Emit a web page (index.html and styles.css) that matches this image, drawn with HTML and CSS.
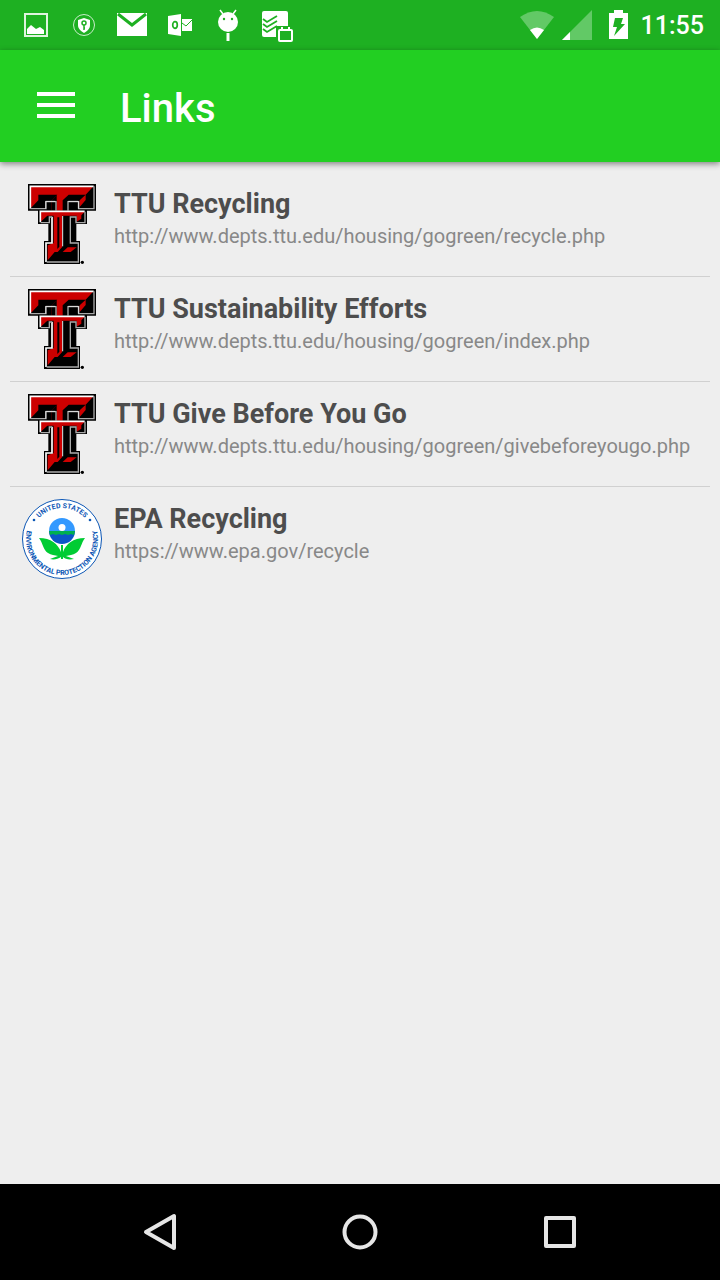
FILE: index.html
```html
<!DOCTYPE html>
<html lang="en">
<head>
<meta charset="utf-8">
<meta name="viewport" content="width=device-width, initial-scale=1">
<title>Links</title>
<link rel="stylesheet" href="styles.css">
</head>
<body>
<svg class="defs" aria-hidden="true">
  <symbol id="double-t" viewBox="18 18 240 240">
    <path d="M36 18H240V98H213V138H181V189H192V258H84V189H97V138H66V98H36Z" fill="#000"/>
    <path d="M45 26H233V90H189V69H155V98H122V69H89V90H45Z" fill="#000"/>
    <path d="M45 26H231L209 50V66L191 87V67L209 50H158L140 67V98H106V69L124 50H67V67L47 88H45Z" fill="#c00"/>
    <path d="M106 69L122 52V98H106Z" fill="#000"/>
    <path d="M43 92V25H233" fill="none" stroke="#fff" stroke-width="5"/>
    <path d="M234 25V92H188V71H156V98M120 98V71H90V92H43" fill="none" stroke="#aaa" stroke-width="4"/>
    <path d="M89 92V70H118M187 92V70H157" fill="none" stroke="#fff" stroke-width="2"/>
    <path d="M72 98H209V134H178V118H164V195H187V253H90V195H108V118H100V134H72Z" fill="#000"/>
    <path d="M74 101H206L196 112V122L182 131V113H138V208L125 222H116L95 247V202L113 195V113H94L76 130H74Z" fill="#c00"/>
    <path d="M124 118H130V206L124 213Z" fill="#000"/>
    <path d="M140 222L155 208H182L164 222Z" fill="#c00"/>
    <path d="M73 133V100H206M108 116V195H90V252" fill="none" stroke="#fff" stroke-width="5"/>
    <path d="M207 101V134H180V117H163V195H187V252H92M108 117H100V134H74" fill="none" stroke="#aaa" stroke-width="4"/>
    <path d="M140 114V205" fill="none" stroke="#e8e8e8" stroke-width="3"/>
    <circle cx="199" cy="253" r="5"/>
  </symbol>
</svg>
<div class="screen">
  <div class="status">
    <div class="notices">
      <svg viewBox="0 0 32 32"><path d="M5 5h22v22H5z" fill="none" stroke="#dff4df" stroke-width="2"/><path d="M7 25v-5l4-4 5 4 4-2 4 3v4z" fill="#fff"/></svg>
      <svg viewBox="0 0 32 32"><circle cx="16" cy="16" r="10.500" fill="none" stroke="#c8edc9"/><path d="M16 9l6 2v5c0 4-3 6-6 8-3-2-6-4-6-8v-5z" fill="#fff"/><circle cx="16" cy="14" r="2" fill="none" stroke="#1eb022" stroke-width="1.500"/><path d="M16 16v5m0-2h1" stroke="#1eb022" stroke-width="1.500"/></svg>
      <svg viewBox="0 0 32 32"><path d="M1 4h30v23H1z" fill="#fff"/><path d="M2 5l14 11L30 5" fill="none" stroke="#1eb022" stroke-width="3"/></svg>
      <svg viewBox="0 0 32 32"><path d="M4 7l13-2v22L4 25zM18 10h10v12H18z" fill="#fff"/><ellipse cx="11" cy="16" rx="2.300" ry="3.300" fill="none" stroke="#1eb022" stroke-width="1.700"/><path d="M18 14l4 3 6-6" fill="none" stroke="#1eb022"/></svg>
      <svg viewBox="0 0 32 32"><circle cx="16" cy="13" r="10" fill="#fff"/><path d="M11 5L8 1m13 4l3-4" stroke="#fff" stroke-width="1.500"/><path d="M16 24v8" stroke="#fff" stroke-width="3"/><circle cx="12" cy="10" r="1.200" fill="#1eb022"/><circle cx="20" cy="10" r="1.200" fill="#1eb022"/></svg>
      <svg class="tasks" viewBox="0 0 34 34"><rect x="2" y="3" width="26" height="26" rx="2" fill="#fff"/><path d="M3 11l4 3 10-6M3 16l4 3 10-6M3 21l4 3 10-6" fill="none" stroke="#1eb022" stroke-width="1.800"/><path d="M16 18h15v15H16z" fill="#1eb022"/><rect x="19" y="22" width="13" height="11" rx="1" fill="#1eb022" stroke="#fff" stroke-width="2"/><path d="M22 19v3m7-3v3" stroke="#fff" stroke-width="2"/></svg>
    </div>
    <div class="system">
      <svg class="wifi" viewBox="0 0 36 32"><path d="M18 30L1 8q17-12 34 0z" fill="#62c966"/><path d="M18 30l-7-9q7-5 14 0z" fill="#fff"/></svg>
      <svg class="signal" viewBox="0 0 30 30"><path d="M0 30L30 0v30z" fill="#62c966"/><path d="M0 30l8-8v8z" fill="#fff"/></svg>
      <svg class="battery" viewBox="0 0 20 30"><path d="M5 0h9v3h5v26H0V3h5z" fill="#fff"/><path d="M6 8h8l-2 6h4L5 26l3-9H4z" fill="#1eb022"/></svg>
      <time>11:55</time>
    </div>
  </div>
  <header class="bar">
    <button class="menu" aria-label="Open menu"><svg viewBox="0 0 38 26"><path d="M0 2h38M0 13h38M0 24h38" stroke="#fff" stroke-width="4"/></svg></button>
    <h1>Links</h1>
  </header>
  <main class="list">
    <a class="item" href="http://www.depts.ttu.edu/housing/gogreen/recycle.php"><svg class="logo"><use href="#double-t"/></svg><span class="copy"><strong>TTU Recycling</strong><span class="url">http://www.depts.ttu.edu/housing/gogreen/recycle.php</span></span></a>
    <a class="item" href="http://www.depts.ttu.edu/housing/gogreen/index.php"><svg class="logo"><use href="#double-t"/></svg><span class="copy"><strong>TTU Sustainability Efforts</strong><span class="url">http://www.depts.ttu.edu/housing/gogreen/index.php</span></span></a>
    <a class="item" href="http://www.depts.ttu.edu/housing/gogreen/givebeforeyougo.php"><svg class="logo"><use href="#double-t"/></svg><span class="copy"><strong>TTU Give Before You Go</strong><span class="url">http://www.depts.ttu.edu/housing/gogreen/givebeforeyougo.php</span></span></a>
    <a class="item" href="https://www.epa.gov/recycle">
      <svg class="logo" viewBox="0 0 80 80">
        <circle cx="40" cy="40" r="39.500" fill="#fff" stroke="#0b56b5"/>
        <path d="M27 32a13 13 0 0 1 26 0z" fill="#39f"/>
        <path d="M27 32h26a13 13 0 0 1-26 0z" fill="#0b56c8"/>
        <path d="M27 32h26l-1 4-3-1-3 1-3-1-3 1-3-1-3 1-3-1-3 1z" fill="#00b050"/>
        <circle cx="40" cy="28.500" r="3.500" fill="#fff"/>
        <path d="M39 46h2v7c3-8 10-14 22-14-4 5-4 12-9 15-3 2-7 2-10 3l8 3c-5 1-9 0-11-2v2h-2v-2c-3 2-7 3-11 2l8-3c-3-1-7-1-10-3-5-3-5-10-9-15 12 0 19 6 22 14z" fill="#0c3"/>
        <path id="seal-top" d="M9 40a31 31 0 0 1 62 0" fill="none"/>
        <path id="seal-bottom" d="M7.400 24.800A36 36 0 1 0 72.600 24.800" fill="none"/>
        <text class="seal-text"><textPath href="#seal-top" startOffset="50%" text-anchor="middle">UNITED STATES</textPath></text>
        <text class="seal-text"><textPath href="#seal-bottom" startOffset="50%" text-anchor="middle">ENVIRONMENTAL PROTECTION AGENCY</textPath></text>
        <circle cx="12" cy="21" r="1.300" fill="#0b56b5"/><circle cx="68" cy="21" r="1.300" fill="#0b56b5"/>
      </svg>
      <span class="copy"><strong>EPA Recycling</strong><span class="url">https://www.epa.gov/recycle</span></span></a>
  </main>
  <nav class="navbar">
    <button aria-label="Back"><svg viewBox="0 0 40 40"><path d="M34 4v32L6 20z" fill="none" stroke="#e6e6e6" stroke-width="4" stroke-linejoin="round"/></svg></button>
    <button aria-label="Home"><svg viewBox="0 0 40 40"><circle cx="20" cy="20" r="15.500" fill="none" stroke="#e6e6e6" stroke-width="4"/></svg></button>
    <button aria-label="Recent apps"><svg viewBox="0 0 40 40"><rect x="6" y="6" width="28" height="28" fill="none" stroke="#e6e6e6" stroke-width="4" stroke-linejoin="round"/></svg></button>
  </nav>
</div>
</body>
</html>
```
FILE: styles.css
```css
* { box-sizing: border-box; }
body { margin: 0; background: #eee; font-family: Roboto, sans-serif; }
button { padding: 0; border: 0; background: none; cursor: pointer; }
svg { display: block; flex: none; }
.defs { position: absolute; width: 0; height: 0; }
.screen { display: flex; flex-direction: column; min-height: 100vh; }
.status { display: flex; justify-content: space-between; align-items: center; height: 50px; padding: 0 16px 0 20px; background: #1eb022; color: #fff; }
.notices { display: flex; align-items: center; gap: 16px; }
.notices svg { width: 32px; height: 32px; }
.notices .tasks { width: 34px; height: 34px; }
.system { display: flex; align-items: center; }
.wifi { width: 36px; height: 32px; margin-right: 7px; }
.signal { width: 30px; height: 30px; margin-right: 17px; }
.battery { width: 20px; height: 30px; margin-right: 12px; }
time { padding-top: 2px; font-size: 25px; font-weight: 500; line-height: 30px; }
.bar { display: flex; align-items: center; gap: 45px; height: 112px; padding: 0 37px; background: #22cf22; color: #fff; box-shadow: 0 2px 6px rgba(0, 0, 0, .45); }
.menu { padding-bottom: 2px; }
.menu svg { width: 38px; height: 26px; }
h1 { margin: 0; padding-top: 6px; font-size: 40px; font-weight: 500; line-height: 48px; }
.list { flex: 1; padding: 10px; }
.item { display: flex; gap: 12px; padding: 12px; color: #888; text-decoration: none; }
.item + .item { border-top: 1px solid #d0d0d0; }
.logo { width: 80px; height: 80px; }
.copy { display: flex; flex-direction: column; padding-top: 2px; white-space: nowrap; }
.copy strong { color: #4d4d4d; font-size: 27px; font-weight: 700; line-height: 36px; }
.url { font-size: 20px; line-height: 28px; }
.seal-text { fill: #0b56b5; font: 700 7px Roboto, sans-serif; }
.navbar { display: flex; justify-content: center; height: 96px; background: #000; }
.navbar button { display: flex; align-items: center; justify-content: center; flex: 0 1 200px; }
.navbar svg { width: 40px; height: 40px; }
```
